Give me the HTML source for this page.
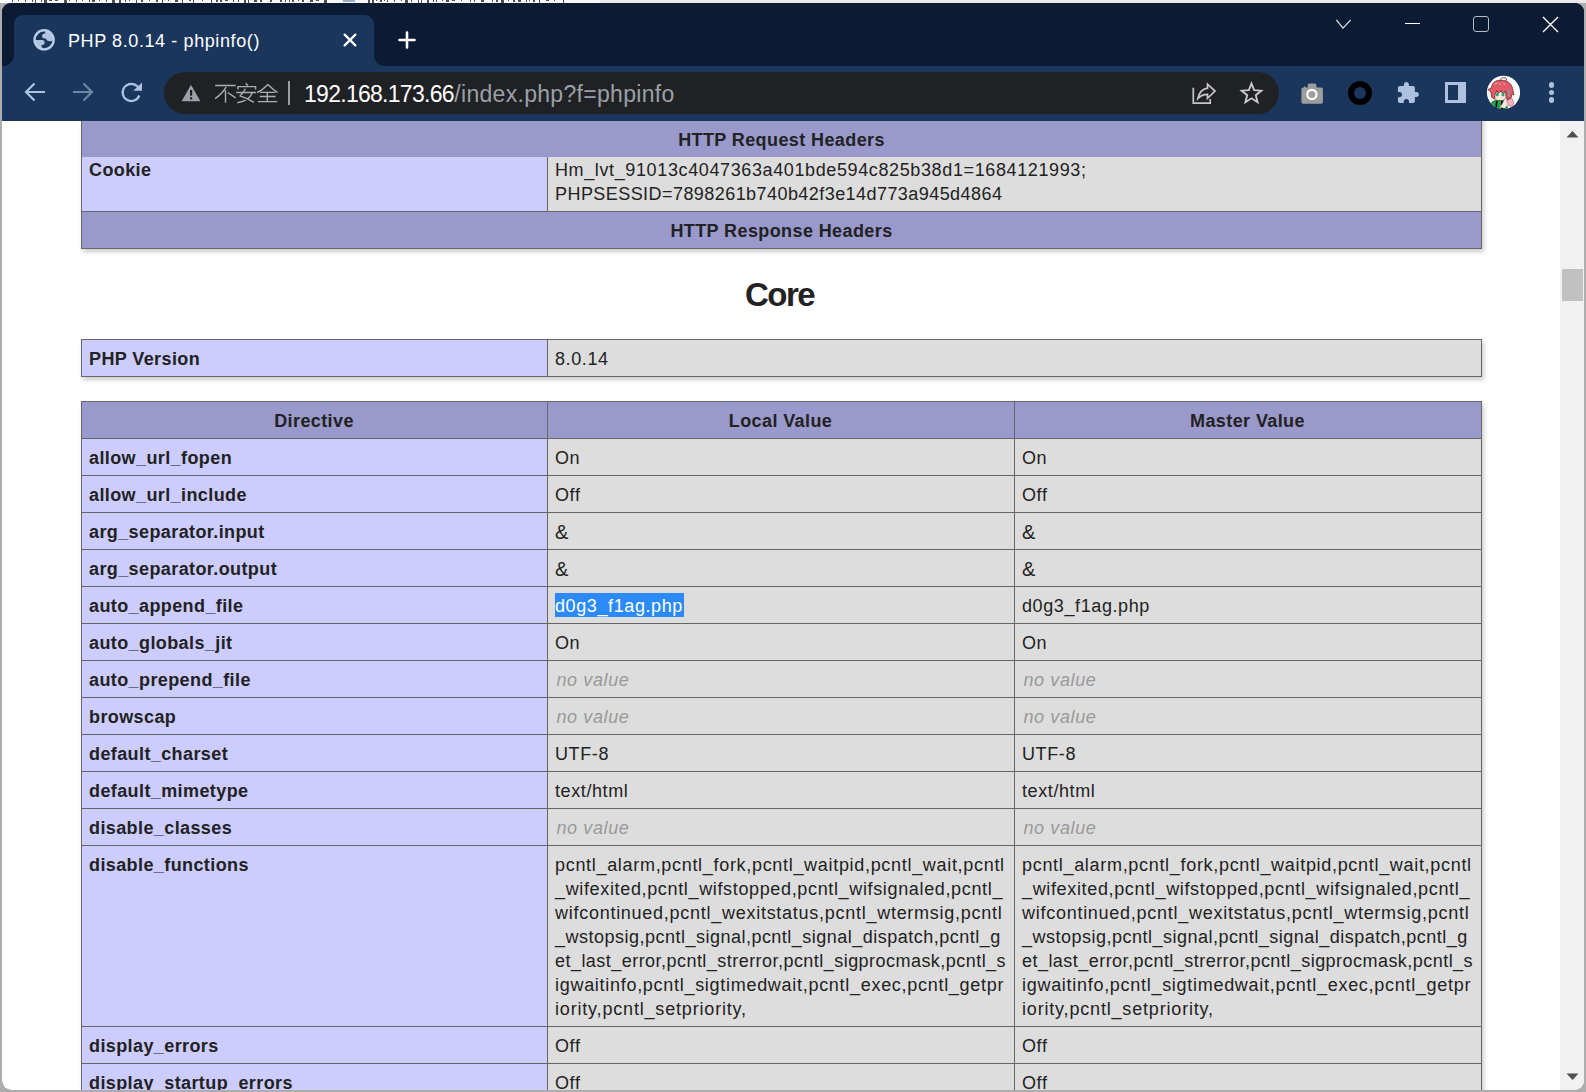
<!DOCTYPE html>
<html><head><meta charset="utf-8"><title>PHP 8.0.14 - phpinfo()</title>
<style>
*{margin:0;padding:0;box-sizing:border-box}
html,body{width:1586px;height:1092px;overflow:hidden;background:#adadad;font-family:"Liberation Sans",sans-serif}
.abs{position:absolute}
#win{position:absolute;left:2px;top:3px;width:1582px;height:1087px;border-radius:9px;overflow:hidden;background:#0b1b33}
#page{position:absolute;left:0;top:118px;width:1558px;height:969px;background:#fff;overflow:hidden}
#pin{position:absolute;left:-2px;top:-121px;width:1586px;height:1092px}
.hl{position:absolute;height:1px;background:#666}
.vl{position:absolute;width:1px;background:#666}
.t{position:absolute;font-size:18px;line-height:24px;white-space:nowrap;color:#222;letter-spacing:0.6px}
.t.b{font-weight:bold;letter-spacing:0.4px}
.t.i{font-style:italic}
.sel{background:#2b8af8;color:#fff;height:24px;padding:0 1px 0 0}
.shadow{position:absolute;box-shadow:1.5px 3px 4.5px #ccc}
.h2{position:absolute;left:79px;width:1401px;top:277px;text-align:center;font-size:33px;line-height:36px;font-weight:bold;color:#222;letter-spacing:-1.5px}
</style></head>
<body>
<div class="abs" style="left:0;top:0;width:1586px;height:3px;background:#e9e9e9"></div><div class="abs" style="left:0;top:0;width:600px;height:2.5px;background:#f7f7f7"></div><div class="abs" style="left:12px;top:0;width:1px;height:2px;background:#505050"></div><div class="abs" style="left:18px;top:0;width:1px;height:1px;background:#505050"></div><div class="abs" style="left:25px;top:0;width:1px;height:2px;background:#505050"></div><div class="abs" style="left:32px;top:0;width:1px;height:2px;background:#505050"></div><div class="abs" style="left:35px;top:0;width:1px;height:2.5px;background:#505050"></div><div class="abs" style="left:41px;top:0;width:1px;height:2px;background:#505050"></div><div class="abs" style="left:44px;top:0;width:3px;height:2.5px;background:#505050"></div><div class="abs" style="left:49px;top:0;width:3px;height:1px;background:#505050"></div><div class="abs" style="left:55px;top:0;width:3px;height:1px;background:#505050"></div><div class="abs" style="left:64px;top:0;width:3px;height:2.5px;background:#505050"></div><div class="abs" style="left:69px;top:0;width:1px;height:1px;background:#505050"></div><div class="abs" style="left:76px;top:0;width:1px;height:2px;background:#505050"></div><div class="abs" style="left:82px;top:0;width:1px;height:1px;background:#505050"></div><div class="abs" style="left:89px;top:0;width:1px;height:2px;background:#505050"></div><div class="abs" style="left:92px;top:0;width:3px;height:2px;background:#505050"></div><div class="abs" style="left:99px;top:0;width:1px;height:1px;background:#505050"></div><div class="abs" style="left:106px;top:0;width:1px;height:2px;background:#505050"></div><div class="abs" style="left:112px;top:0;width:3px;height:2.5px;background:#505050"></div><div class="abs" style="left:119px;top:0;width:2px;height:2.5px;background:#505050"></div><div class="abs" style="left:125px;top:0;width:1px;height:2px;background:#505050"></div><div class="abs" style="left:129px;top:0;width:1px;height:1px;background:#505050"></div><div class="abs" style="left:136px;top:0;width:1px;height:2.5px;background:#505050"></div><div class="abs" style="left:141px;top:0;width:2px;height:2px;background:#505050"></div><div class="abs" style="left:149px;top:0;width:1px;height:1px;background:#505050"></div><div class="abs" style="left:156px;top:0;width:2px;height:2px;background:#505050"></div><div class="abs" style="left:162px;top:0;width:1px;height:2.5px;background:#505050"></div><div class="abs" style="left:168px;top:0;width:1px;height:1px;background:#505050"></div><div class="abs" style="left:175px;top:0;width:3px;height:2px;background:#505050"></div><div class="abs" style="left:182px;top:0;width:1px;height:2.5px;background:#505050"></div><div class="abs" style="left:189px;top:0;width:2px;height:1px;background:#505050"></div><div class="abs" style="left:193px;top:0;width:1px;height:2.5px;background:#505050"></div><div class="abs" style="left:202px;top:0;width:1px;height:1px;background:#505050"></div><div class="abs" style="left:211px;top:0;width:1px;height:2.5px;background:#505050"></div><div class="abs" style="left:216px;top:0;width:2px;height:2px;background:#505050"></div><div class="abs" style="left:220px;top:0;width:2px;height:2px;background:#505050"></div><div class="abs" style="left:225px;top:0;width:3px;height:1px;background:#505050"></div><div class="abs" style="left:233px;top:0;width:1px;height:2px;background:#505050"></div><div class="abs" style="left:238px;top:0;width:1px;height:2px;background:#505050"></div><div class="abs" style="left:244px;top:0;width:2px;height:2.5px;background:#505050"></div><div class="abs" style="left:248px;top:0;width:1px;height:2.5px;background:#505050"></div><div class="abs" style="left:254px;top:0;width:3px;height:2px;background:#505050"></div><div class="abs" style="left:260px;top:0;width:2px;height:2px;background:#505050"></div><div class="abs" style="left:270px;top:0;width:2px;height:2px;background:#505050"></div><div class="abs" style="left:280px;top:0;width:2px;height:2px;background:#505050"></div><div class="abs" style="left:285px;top:0;width:1px;height:2px;background:#505050"></div><div class="abs" style="left:289px;top:0;width:1px;height:2px;background:#505050"></div><div class="abs" style="left:292px;top:0;width:2px;height:2px;background:#505050"></div><div class="abs" style="left:298px;top:0;width:1px;height:1px;background:#505050"></div><div class="abs" style="left:302px;top:0;width:2px;height:2px;background:#505050"></div><div class="abs" style="left:310px;top:0;width:3px;height:2px;background:#505050"></div><div class="abs" style="left:316px;top:0;width:3px;height:1px;background:#505050"></div><div class="abs" style="left:324px;top:0;width:3px;height:2.5px;background:#505050"></div><div class="abs" style="left:368px;top:0;width:2px;height:2.5px;background:#505050"></div><div class="abs" style="left:372px;top:0;width:2px;height:2.5px;background:#505050"></div><div class="abs" style="left:376px;top:0;width:1px;height:1px;background:#505050"></div><div class="abs" style="left:380px;top:0;width:2px;height:2px;background:#505050"></div><div class="abs" style="left:384px;top:0;width:1px;height:1px;background:#505050"></div><div class="abs" style="left:387px;top:0;width:1px;height:2px;background:#505050"></div><div class="abs" style="left:394px;top:0;width:1px;height:2px;background:#505050"></div><div class="abs" style="left:401px;top:0;width:1px;height:1px;background:#505050"></div><div class="abs" style="left:405px;top:0;width:3px;height:2.5px;background:#505050"></div><div class="abs" style="left:411px;top:0;width:1px;height:2px;background:#505050"></div><div class="abs" style="left:418px;top:0;width:1px;height:2.5px;background:#505050"></div><div class="abs" style="left:421px;top:0;width:1px;height:2.5px;background:#505050"></div><div class="abs" style="left:427px;top:0;width:2px;height:2.5px;background:#505050"></div><div class="abs" style="left:433px;top:0;width:1px;height:2px;background:#505050"></div><div class="abs" style="left:436px;top:0;width:1px;height:2px;background:#505050"></div><div class="abs" style="left:442px;top:0;width:1px;height:1px;background:#505050"></div><div class="abs" style="left:446px;top:0;width:3px;height:2px;background:#505050"></div><div class="abs" style="left:452px;top:0;width:3px;height:1px;background:#505050"></div><div class="abs" style="left:461px;top:0;width:1px;height:1px;background:#505050"></div><div class="abs" style="left:470px;top:0;width:1px;height:2px;background:#505050"></div><div class="abs" style="left:474px;top:0;width:1px;height:2px;background:#505050"></div><div class="abs" style="left:481px;top:0;width:3px;height:2px;background:#505050"></div><div class="abs" style="left:492px;top:0;width:1px;height:2px;background:#505050"></div><div class="abs" style="left:496px;top:0;width:2px;height:2px;background:#505050"></div><div class="abs" style="left:501px;top:0;width:3px;height:2.5px;background:#505050"></div><div class="abs" style="left:508px;top:0;width:1px;height:1px;background:#505050"></div><div class="abs" style="left:513px;top:0;width:2px;height:2px;background:#505050"></div><div class="abs" style="left:518px;top:0;width:3px;height:2px;background:#505050"></div><div class="abs" style="left:526px;top:0;width:1px;height:2px;background:#505050"></div><div class="abs" style="left:529px;top:0;width:1px;height:1px;background:#505050"></div><div class="abs" style="left:533px;top:0;width:2px;height:2px;background:#505050"></div><div class="abs" style="left:539px;top:0;width:1px;height:2.5px;background:#505050"></div><div class="abs" style="left:546px;top:0;width:3px;height:1px;background:#505050"></div><div class="abs" style="left:554px;top:0;width:1px;height:1px;background:#505050"></div><div class="abs" style="left:563px;top:0;width:1px;height:2.5px;background:#505050"></div><div class="abs" style="left:343px;top:0;width:12px;height:2px;background:#9db0c8"></div>
<div id="win">
<div style="position:absolute;left:-2px;top:-3px;width:1586px;height:1092px">
<div class="abs" style="left:0;top:0;width:1586px;height:121px;background:#0b1b33"></div>
<div class="abs" style="left:14px;top:15px;width:360px;height:52px;background:#1b365d;border-radius:9px 9px 0 0"></div>
<svg class="abs" style="left:3px;top:55px" width="11" height="11"><path d="M11 0 A11 11 0 0 1 0 11 L11 11Z" fill="#1b365d"/></svg>
<svg class="abs" style="left:374px;top:55px" width="11" height="11"><path d="M0 0 A11 11 0 0 0 11 11 L0 11Z" fill="#1b365d"/></svg>
<div class="abs" style="left:0;top:66px;width:1586px;height:55px;background:#1b365d"></div>
<svg class="abs" style="left:33px;top:29px" width="22" height="22" viewBox="0 0 22 22">
<defs><clipPath id="gl"><circle cx="11.1" cy="10.85" r="10"/></clipPath></defs>
<g clip-path="url(#gl)" fill="#b2c3df">
<path d="M12.2 0 L12.2 4.3 C10.2 4.7 9 5.8 9 7.5 C9 8.8 10.3 9.6 12.9 9.6 C13.3 11.2 14.8 12.3 16.6 12.3 C18 12.3 19.2 11.6 20 10.7 L22 10.7 L22 0 Z"/>
<path d="M0 10.9 L9.3 10.9 C10.9 11 11.8 12.3 11.7 13.7 C11.7 15 10.8 15.8 9.1 15.9 C8.2 16 8.3 17.5 9 18.5 L10.5 22 L0 22Z"/>
</g>
<circle cx="11.1" cy="10.85" r="9.55" fill="none" stroke="#bccde8" stroke-width="2.4"/>
</svg>
<div class="abs" style="left:68px;top:30px;font-size:18px;line-height:22px;color:#fff;letter-spacing:0.6px;white-space:nowrap">PHP 8.0.14 - phpinfo()</div>
<svg class="abs" style="left:342px;top:32px" width="16" height="16"><path d="M2.6 2.6 L13.4 13.4 M13.4 2.6 L2.6 13.4" stroke="#fff" stroke-width="2.2" stroke-linecap="round"/></svg>
<svg class="abs" style="left:397px;top:30px" width="20" height="20"><path d="M10 2.5 V17.5 M2.5 10 H17.5" stroke="#fff" stroke-width="2.6" stroke-linecap="round"/></svg>
<svg class="abs" style="left:1334px;top:17px" width="20" height="14"><path d="M2.4 2.9 L9 11.1 L16.7 2.9" fill="none" stroke="#e6e8ee" stroke-width="1.2"/></svg>
<div class="abs" style="left:1405px;top:23px;width:15px;height:1.3px;background:#fff"></div>
<div class="abs" style="left:1473px;top:16px;width:16px;height:16px;border:1.5px solid #b6bcc6;border-radius:3px"></div>
<svg class="abs" style="left:1541px;top:15px" width="19" height="19"><path d="M2 2 L17 17 M17 2 L2 17" stroke="#fff" stroke-width="1.4"/></svg>
<svg class="abs" style="left:22px;top:80px" width="26" height="24" viewBox="0 0 26 24"><path d="M23 12 H4.5 M12.5 3.5 L4 12 L12.5 20.5" fill="none" stroke="#aec2e0" stroke-width="2.2"/></svg>
<svg class="abs" style="left:70px;top:80px" width="26" height="24" viewBox="0 0 26 24"><path d="M3 12 H21.5 M13.5 3.5 L22 12 L13.5 20.5" fill="none" stroke="#6e86a8" stroke-width="2.2"/></svg>
<svg class="abs" style="left:119px;top:80px" width="26" height="26" viewBox="0 0 26 26"><path d="M20.3 15.5 A8.6 8.6 0 1 1 18.8 6.8" fill="none" stroke="#aec2e0" stroke-width="2.2"/><path d="M14.3 10.8 L23 10.8 L23 2.4Z" fill="#aec2e0"/></svg>
<div class="abs" style="left:164px;top:72px;width:1115px;height:42px;border-radius:21px;background:#202124"></div>
<svg class="abs" style="left:181px;top:84px" width="20" height="18" viewBox="0 0 20 18"><path d="M10 0.8 L19.4 17.2 L0.6 17.2Z" fill="#9aa0a6"/><rect x="9" y="6" width="2.2" height="5.6" fill="#202124"/><rect x="9" y="13.2" width="2.2" height="2.2" fill="#202124"/></svg>
<svg class="abs" style="left:210px;top:78px" width="85" height="30" viewBox="0 0 85 30" fill="none" stroke="#a9aeb5" stroke-width="1.4">
<path d="M5.1 7.5 H25.7 M16.1 9.1 C13.5 13.5 9.5 17.5 5.1 20.6 M15.5 12.3 V24.7 M17.7 14.5 L25.7 19.8"/>
<path d="M35.6 5.4 L38 7.5 M27.9 11.5 V8.6 H45.6 V11.5 M26.3 14.5 H46.1 M35.4 10.7 C34 13.5 32 16 30 17.9 C35 19.5 40 21.8 43.9 24.4 M42.3 15 C40 20.5 35 23.5 27.3 24.7"/>
<path d="M57.9 6.4 C55 9.5 51.5 12.5 47.2 14.5 M57.9 6.4 C61 9.5 64.5 12.5 67.8 14.5 M50 14.4 H65.4 M49.8 18.5 H65.6 M48 23.6 H67.3 M57.3 14.5 V23.6"/>
</svg>
<div class="abs" style="left:288.3px;top:81px;width:1.8px;height:24px;background:#9aa0a6"></div>
<div class="abs" style="left:304px;top:81px;font-size:23px;line-height:27px;white-space:nowrap;color:#fff;letter-spacing:-0.72px">192.168.173.66<span style="color:#9aa0a6;letter-spacing:0.3px;margin-left:0.5px">/index.php?f=phpinfo</span></div>
<svg class="abs" style="left:1191px;top:81px" width="26" height="24" viewBox="0 0 26 24" fill="none" stroke="#c8c8c8" stroke-width="1.7">
<path d="M2.3 6.8 V22.2 H19.2 V18"/>
<path d="M6.9 17.5 C8 12 11 8.2 16.5 7.2 V3.2 L24 10 L16.5 17.3 V13.4 C12.5 13.4 9.5 14.7 6.9 17.5Z" stroke-linejoin="miter"/>
</svg>
<svg class="abs" style="left:1239px;top:81px" width="25" height="24" viewBox="0 0 25 24"><path d="M12.50 2.60 L15.15 9.20 L22.30 9.67 L16.80 14.20 L18.55 21.18 L12.50 17.30 L6.45 21.18 L8.20 14.20 L2.70 9.67 L9.85 9.20Z" fill="none" stroke="#c8c8c8" stroke-width="1.9" stroke-linejoin="miter"/></svg>
<svg class="abs" style="left:1300px;top:83px" width="24" height="22" viewBox="0 0 24 22"><rect x="1.4" y="4.6" width="21.5" height="16.2" rx="1.8" fill="#9e9e9e"/><path d="M7.8 5 V2.2 Q7.8 0.4 9.6 0.4 L14.6 0.4 Q16.4 0.4 16.4 2.2 V5Z" fill="#9e9e9e"/><path d="M3.6 5 L4.6 2.8 L5.8 5Z" fill="#9e9e9e"/><circle cx="11.9" cy="11.4" r="4.6" fill="none" stroke="#fff" stroke-width="2.2"/></svg>
<div class="abs" style="left:1348px;top:81px;width:24px;height:24px;border-radius:50%;border:6px solid #000"></div>
<svg class="abs" style="left:1396px;top:80px" width="24" height="25" viewBox="0 0 24 25"><path transform="translate(-0.1 1.1)" d="M20.5 11H19V7c0-1.1-.9-2-2-2h-4V3.5C13 2.12 11.88 1 10.5 1S8 2.12 8 3.5V5H4c-1.1 0-1.99.9-1.99 2v3.8H3.5c1.49 0 2.7 1.21 2.7 2.7s-1.21 2.7-2.7 2.7H2V20c0 1.1.9 2 2 2h3.8v-1.5c0-1.490 1.21-2.7 2.7-2.7 1.49 0 2.7 1.21 2.7 2.7V22H17c1.1 0 2-.9 2-2v-4h1.5c1.38 0 2.5-1.12 2.5-2.5S21.88 11 20.5 11z" fill="#aec2e0"/></svg>
<div class="abs" style="left:1445px;top:82px;width:21px;height:21px;border:3px solid #aec2e0;border-right-width:8px"></div>
<svg class="abs" style="left:1486px;top:75px" width="34" height="34" viewBox="0 0 34 34">
<defs><clipPath id="av"><circle cx="17.5" cy="17.4" r="16.6"/></clipPath></defs>
<circle cx="17.5" cy="17.4" r="16.6" fill="#fdfdfd"/>
<g clip-path="url(#av)">
<path d="M4.5 34 L6 27 L10 25 L16 25 L20.5 27 L21.5 34Z" fill="#2aa444" stroke="#0e2a12" stroke-width="0.6"/>
<path d="M9 34 L10 26 L11.6 26 L11 34Z M15 34 L15 26 L16.8 26 L17 34Z" fill="#0c0c0c"/>
<path d="M14 32.5 L18 26 L21 25 L22 29 L19 33Z" fill="#f7e2e2"/>
<path d="M20.5 22 L26 23.5 L28 27.5 L26.5 31.5 L23 31 L21 27Z" fill="#ecb4be" stroke="#b04050" stroke-width="0.5"/>
<path d="M8.3 16.5 L19.5 16.5 L19.8 23.5 L16.5 25.5 L11 25.5 L8.3 23Z" fill="#fbe8dd" stroke="#3a1a1a" stroke-width="0.5"/>
<path d="M2 14.5 L5.5 13 C5.5 8.5 9 5 15 5.3 C21.5 5.3 25.5 8.5 26.5 13.5 L28 20 L26 19 L25 23 L21.5 25 L20.5 20 L19.5 16 L16.8 19.5 L15.3 15.5 L12.5 18.5 L11 15.5 L9 19.5 L8.5 24 L5.5 22 L5 17Z" fill="#e25c68" stroke="#6e2228" stroke-width="0.75" stroke-linejoin="round"/>
<path d="M8.5 9 L11.5 8 M13.5 8 L14.5 10 M17.5 8 L19 10" stroke="#f3a6ae" stroke-width="1"/>
<path d="M14.3 5.3 C14.8 2.3 18 2.3 20 3.3 C21 4.3 20.5 5.8 19.5 5.8" fill="none" stroke="#6e2228" stroke-width="0.9"/>
<path d="M22 14.5 L24 15.5 L23.5 20 L22 21Z" fill="#8e959e"/>
<ellipse cx="11.3" cy="19.6" rx="1.5" ry="1.9" fill="#22a878"/>
<ellipse cx="17" cy="19.6" rx="1.5" ry="1.9" fill="#22a878"/>
</g></svg>
<div class="abs" style="left:1548.7px;top:82.4px;width:5.2px;height:5.2px;border-radius:50%;background:#aec2e0"></div>
<div class="abs" style="left:1548.7px;top:89.9px;width:5.2px;height:5.2px;border-radius:50%;background:#aec2e0"></div>
<div class="abs" style="left:1548.7px;top:97.4px;width:5.2px;height:5.2px;border-radius:50%;background:#aec2e0"></div>
<div class="abs" style="left:0;top:121px;width:1586px;height:971px;background:#fff;overflow:hidden"><div style="position:absolute;left:0;top:-121px;width:1586px;height:1092px">
<div style="position:absolute;left:81px;top:121px;width:466px;height:90px;background:#ccccff;"></div>
<div style="position:absolute;left:547px;top:121px;width:934px;height:90px;background:#dddddd;"></div>
<div class="vl" style="left:547px;top:121px;height:91px"></div>
<div class="hl" style="left:81px;top:211px;width:1401px"></div>
<div class="t b" style="left:89px;top:158px;">Cookie</div>
<div class="t" style="left:555px;top:158px;letter-spacing:0.62px;">Hm_lvt_91013c4047363a401bde594c825b38d1=1684121993;</div>
<div class="t" style="left:555px;top:182px;letter-spacing:0.44px;">PHPSESSID=7898261b740b42f3e14d773a945d4864</div>
<div style="position:absolute;left:81px;top:212px;width:1400px;height:36px;background:#9999cc;"></div>
<div class="hl" style="left:81px;top:248px;width:1401px"></div>
<div class="t b" style="left:81px;top:219px;width:1401px;text-align:center;">HTTP Response Headers</div>
<div style="position:absolute;left:81px;top:121px;width:1401px;height:36px;background:#9999cc;"></div>
<div class="t b" style="left:81px;top:128px;width:1401px;text-align:center;">HTTP Request Headers</div>
<div class="vl" style="left:81px;top:121px;height:128px"></div>
<div class="vl" style="left:1481px;top:121px;height:128px"></div>
<div class="h2">Core</div>
<div class="shadow" style="left:81px;top:111px;width:1401px;height:138px"></div>
<div class="shadow" style="left:81px;top:339px;width:1401px;height:38px"></div>
<div style="position:absolute;left:81px;top:339px;width:466px;height:37px;background:#ccccff;"></div>
<div style="position:absolute;left:547px;top:339px;width:934px;height:37px;background:#dddddd;"></div>
<div class="hl" style="left:81px;top:339px;width:1401px"></div>
<div class="hl" style="left:81px;top:376px;width:1401px"></div>
<div class="vl" style="left:81px;top:339px;height:38px"></div>
<div class="vl" style="left:547px;top:339px;height:38px"></div>
<div class="vl" style="left:1481px;top:339px;height:38px"></div>
<div class="t b" style="left:89px;top:347px;">PHP Version</div>
<div class="t" style="left:555px;top:347px;">8.0.14</div>
<div class="shadow" style="left:81px;top:401px;width:1401px;height:700px"></div>
<div style="position:absolute;left:81px;top:401px;width:1400px;height:37px;background:#9999cc;"></div>
<div class="t b" style="left:81px;top:409px;width:466px;text-align:center;">Directive</div>
<div class="t b" style="left:547px;top:409px;width:467px;text-align:center;">Local Value</div>
<div class="t b" style="left:1014px;top:409px;width:467px;text-align:center;">Master Value</div>
<div style="position:absolute;left:81px;top:438px;width:466px;height:37px;background:#ccccff;"></div>
<div style="position:absolute;left:547px;top:438px;width:934px;height:37px;background:#dddddd;"></div>
<div class="t b" style="left:89px;top:446px;">allow_url_fopen</div>
<div class="t" style="left:555px;top:446px;">On</div>
<div class="t" style="left:1022px;top:446px;">On</div>
<div style="position:absolute;left:81px;top:475px;width:466px;height:37px;background:#ccccff;"></div>
<div style="position:absolute;left:547px;top:475px;width:934px;height:37px;background:#dddddd;"></div>
<div class="t b" style="left:89px;top:483px;">allow_url_include</div>
<div class="t" style="left:555px;top:483px;">Off</div>
<div class="t" style="left:1022px;top:483px;">Off</div>
<div style="position:absolute;left:81px;top:512px;width:466px;height:37px;background:#ccccff;"></div>
<div style="position:absolute;left:547px;top:512px;width:934px;height:37px;background:#dddddd;"></div>
<div class="t b" style="left:89px;top:520px;">arg_separator.input</div>
<div class="t" style="left:555px;top:520px;font-size:20px;">&amp;</div>
<div class="t" style="left:1022px;top:520px;font-size:20px;">&amp;</div>
<div style="position:absolute;left:81px;top:549px;width:466px;height:37px;background:#ccccff;"></div>
<div style="position:absolute;left:547px;top:549px;width:934px;height:37px;background:#dddddd;"></div>
<div class="t b" style="left:89px;top:557px;">arg_separator.output</div>
<div class="t" style="left:555px;top:557px;font-size:20px;">&amp;</div>
<div class="t" style="left:1022px;top:557px;font-size:20px;">&amp;</div>
<div style="position:absolute;left:81px;top:586px;width:466px;height:37px;background:#ccccff;"></div>
<div style="position:absolute;left:547px;top:586px;width:934px;height:37px;background:#dddddd;"></div>
<div class="t b" style="left:89px;top:594px;">auto_append_file</div>
<div class="t sel" style="left:555px;top:593px;line-height:24px"><span style="position:relative;top:1px">d0g3_f1ag.php</span></div>
<div class="t" style="left:1022px;top:594px;">d0g3_f1ag.php</div>
<div style="position:absolute;left:81px;top:623px;width:466px;height:37px;background:#ccccff;"></div>
<div style="position:absolute;left:547px;top:623px;width:934px;height:37px;background:#dddddd;"></div>
<div class="t b" style="left:89px;top:631px;">auto_globals_jit</div>
<div class="t" style="left:555px;top:631px;">On</div>
<div class="t" style="left:1022px;top:631px;">On</div>
<div style="position:absolute;left:81px;top:660px;width:466px;height:37px;background:#ccccff;"></div>
<div style="position:absolute;left:547px;top:660px;width:934px;height:37px;background:#dddddd;"></div>
<div class="t b" style="left:89px;top:668px;">auto_prepend_file</div>
<div class="t i" style="left:556.5px;top:668px;color:#999;">no value</div>
<div class="t i" style="left:1023.5px;top:668px;color:#999;">no value</div>
<div style="position:absolute;left:81px;top:697px;width:466px;height:37px;background:#ccccff;"></div>
<div style="position:absolute;left:547px;top:697px;width:934px;height:37px;background:#dddddd;"></div>
<div class="t b" style="left:89px;top:705px;">browscap</div>
<div class="t i" style="left:556.5px;top:705px;color:#999;">no value</div>
<div class="t i" style="left:1023.5px;top:705px;color:#999;">no value</div>
<div style="position:absolute;left:81px;top:734px;width:466px;height:37px;background:#ccccff;"></div>
<div style="position:absolute;left:547px;top:734px;width:934px;height:37px;background:#dddddd;"></div>
<div class="t b" style="left:89px;top:742px;">default_charset</div>
<div class="t" style="left:555px;top:742px;">UTF-8</div>
<div class="t" style="left:1022px;top:742px;">UTF-8</div>
<div style="position:absolute;left:81px;top:771px;width:466px;height:37px;background:#ccccff;"></div>
<div style="position:absolute;left:547px;top:771px;width:934px;height:37px;background:#dddddd;"></div>
<div class="t b" style="left:89px;top:779px;">default_mimetype</div>
<div class="t" style="left:555px;top:779px;">text/html</div>
<div class="t" style="left:1022px;top:779px;">text/html</div>
<div style="position:absolute;left:81px;top:808px;width:466px;height:37px;background:#ccccff;"></div>
<div style="position:absolute;left:547px;top:808px;width:934px;height:37px;background:#dddddd;"></div>
<div class="t b" style="left:89px;top:816px;">disable_classes</div>
<div class="t i" style="left:556.5px;top:816px;color:#999;">no value</div>
<div class="t i" style="left:1023.5px;top:816px;color:#999;">no value</div>
<div style="position:absolute;left:81px;top:845px;width:466px;height:181px;background:#ccccff;"></div>
<div style="position:absolute;left:547px;top:845px;width:934px;height:181px;background:#dddddd;"></div>
<div class="t b" style="left:89px;top:853px;">disable_functions</div>
<div class="t" style="left:555px;top:853px;letter-spacing:0.69px;">pcntl_alarm,pcntl_fork,pcntl_waitpid,pcntl_wait,pcntl</div>
<div class="t" style="left:555px;top:877px;letter-spacing:0.65px;">_wifexited,pcntl_wifstopped,pcntl_wifsignaled,pcntl_</div>
<div class="t" style="left:555px;top:901px;letter-spacing:0.73px;">wifcontinued,pcntl_wexitstatus,pcntl_wtermsig,pcntl</div>
<div class="t" style="left:555px;top:925px;letter-spacing:0.49px;">_wstopsig,pcntl_signal,pcntl_signal_dispatch,pcntl_g</div>
<div class="t" style="left:555px;top:949px;letter-spacing:0.46px;">et_last_error,pcntl_strerror,pcntl_sigprocmask,pcntl_s</div>
<div class="t" style="left:555px;top:973px;letter-spacing:0.71px;">igwaitinfo,pcntl_sigtimedwait,pcntl_exec,pcntl_getpr</div>
<div class="t" style="left:555px;top:997px;letter-spacing:0.82px;">iority,pcntl_setpriority,</div>
<div class="t" style="left:1022px;top:853px;letter-spacing:0.69px;">pcntl_alarm,pcntl_fork,pcntl_waitpid,pcntl_wait,pcntl</div>
<div class="t" style="left:1022px;top:877px;letter-spacing:0.65px;">_wifexited,pcntl_wifstopped,pcntl_wifsignaled,pcntl_</div>
<div class="t" style="left:1022px;top:901px;letter-spacing:0.73px;">wifcontinued,pcntl_wexitstatus,pcntl_wtermsig,pcntl</div>
<div class="t" style="left:1022px;top:925px;letter-spacing:0.49px;">_wstopsig,pcntl_signal,pcntl_signal_dispatch,pcntl_g</div>
<div class="t" style="left:1022px;top:949px;letter-spacing:0.46px;">et_last_error,pcntl_strerror,pcntl_sigprocmask,pcntl_s</div>
<div class="t" style="left:1022px;top:973px;letter-spacing:0.71px;">igwaitinfo,pcntl_sigtimedwait,pcntl_exec,pcntl_getpr</div>
<div class="t" style="left:1022px;top:997px;letter-spacing:0.82px;">iority,pcntl_setpriority,</div>
<div style="position:absolute;left:81px;top:1026px;width:466px;height:37px;background:#ccccff;"></div>
<div style="position:absolute;left:547px;top:1026px;width:934px;height:37px;background:#dddddd;"></div>
<div class="t b" style="left:89px;top:1034px;">display_errors</div>
<div class="t" style="left:555px;top:1034px;">Off</div>
<div class="t" style="left:1022px;top:1034px;">Off</div>
<div style="position:absolute;left:81px;top:1063px;width:466px;height:37px;background:#ccccff;"></div>
<div style="position:absolute;left:547px;top:1063px;width:934px;height:37px;background:#dddddd;"></div>
<div class="t b" style="left:89px;top:1071px;">display_startup_errors</div>
<div class="t" style="left:555px;top:1071px;">Off</div>
<div class="t" style="left:1022px;top:1071px;">Off</div>
<div class="hl" style="left:81px;top:401px;width:1401px"></div>
<div class="hl" style="left:81px;top:438px;width:1401px"></div>
<div class="hl" style="left:81px;top:475px;width:1401px"></div>
<div class="hl" style="left:81px;top:512px;width:1401px"></div>
<div class="hl" style="left:81px;top:549px;width:1401px"></div>
<div class="hl" style="left:81px;top:586px;width:1401px"></div>
<div class="hl" style="left:81px;top:623px;width:1401px"></div>
<div class="hl" style="left:81px;top:660px;width:1401px"></div>
<div class="hl" style="left:81px;top:697px;width:1401px"></div>
<div class="hl" style="left:81px;top:734px;width:1401px"></div>
<div class="hl" style="left:81px;top:771px;width:1401px"></div>
<div class="hl" style="left:81px;top:808px;width:1401px"></div>
<div class="hl" style="left:81px;top:845px;width:1401px"></div>
<div class="hl" style="left:81px;top:1026px;width:1401px"></div>
<div class="hl" style="left:81px;top:1063px;width:1401px"></div>
<div class="vl" style="left:81px;top:401px;height:700px"></div>
<div class="vl" style="left:547px;top:401px;height:700px"></div>
<div class="vl" style="left:1014px;top:401px;height:700px"></div>
<div class="vl" style="left:1481px;top:401px;height:700px"></div></div></div>
<div class="abs" style="left:1560px;top:121px;width:24px;height:969px;background:#f1f1f1"></div>
<svg class="abs" style="left:1566px;top:130px" width="13" height="8"><path d="M0.5 7.5 L6.5 1 L12.5 7.5Z" fill="#505050"/></svg>
<div class="abs" style="left:1562px;top:269px;width:21px;height:32px;background:#c1c1c1"></div>
<svg class="abs" style="left:1566px;top:1073px" width="13" height="8"><path d="M0.5 0.5 L6.5 7 L12.5 0.5Z" fill="#505050"/></svg>
</div>
</div>
</body></html>
